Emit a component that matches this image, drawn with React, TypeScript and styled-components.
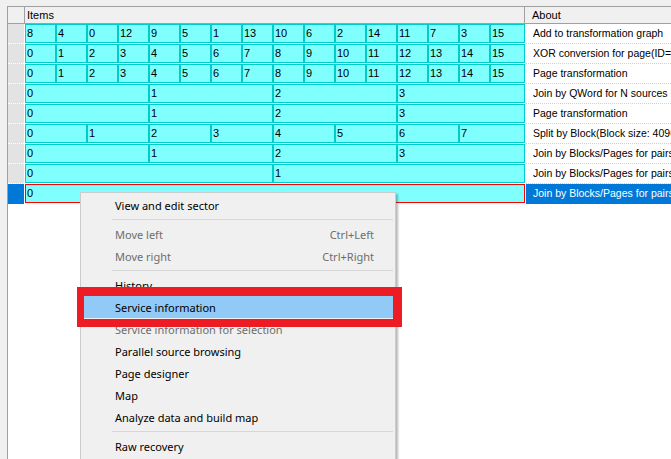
import React from "react";
import styled, { createGlobalStyle } from "styled-components";

const Global = createGlobalStyle`
  html, body { margin: 0; padding: 0; background: #f0f0f0; overflow: hidden; }
  body { width: 671px; height: 459px; }
  * { box-sizing: border-box; }
`;

const Frame = styled.div`
  position: relative;
  width: 671px;
  height: 459px;
  background: #f0f0f0;
  padding: 6px 0 0 7px;
  font-family: "Liberation Sans", Arial, sans-serif;
  font-size: 11px;
  color: #000;
  overflow: hidden;
`;

const Panel = styled.div`
  height: 100%;
  background: #fff;
  border-top: 1px solid #a0a0a0;
  border-left: 1px solid #a0a0a0;
  display: flex;
  flex-direction: column;
`;

const HeaderRow = styled.div`
  display: grid;
  grid-template-columns: 17px 500px 1fr;
  height: 17px;
  background: #f0f0f0;
  border-bottom: 1px solid #a0a0a0;
`;

const HeadCell = styled.div<{ $sep?: boolean; $pad?: number }>`
  display: flex;
  align-items: center;
  padding-left: ${(p) => p.$pad ?? 2}px;
  border-right: ${(p) => (p.$sep ? "1px solid #a0a0a0" : "none")};
  white-space: nowrap;
  overflow: hidden;
`;

const Row = styled.div`
  display: grid;
  grid-template-columns: 16px 1px 500px 1fr;
  height: 20px;
`;

const RowHead = styled.div<{ $sel?: boolean }>`
  background: ${(p) => (p.$sel ? "#0078d7" : "#e3e3e3")};
  border-bottom: 1px dotted ${(p) => (p.$sel ? "#0078d7" : "#ffffff")};
`;

const Gap = styled.div``;

const Cells = styled.div`
  display: grid;
  grid-template-columns: repeat(15, 31px) minmax(0, 1fr);
  height: 19px;
`;

const Cell = styled.div<{ $span: number; $red?: boolean }>`
  grid-column: span ${(p) => p.$span};
  background: #80ffff;
  border: 1px solid ${(p) => (p.$red ? "#ff0000" : "#00cccc")};
  padding-left: 1px;
  line-height: 17px;
  white-space: nowrap;
  overflow: hidden;
`;

const About = styled.div<{ $sel?: boolean }>`
  margin-left: 1px;
  padding-left: 7px;
  line-height: 19px;
  height: 20px;
  font-size: 10.5px;
  white-space: nowrap;
  overflow: hidden;
  background: ${(p) => (p.$sel ? "#0078d7" : "transparent")};
  color: ${(p) => (p.$sel ? "#fff" : "#000")};
  border-bottom: 1px dotted ${(p) => (p.$sel ? "#0078d7" : "#d0d0d0")};
`;

const Menu = styled.div`
  position: absolute;
  left: 80px;
  top: 192px;
  width: 316px;
  height: 290px;
  background: #f0f0f0;
  border: 1px solid #cccccc;
  box-shadow: 2px 2px 2px rgba(0, 0, 0, 0.28);
  padding: 1px 1px;
  font-family: "Noto Sans", "Open Sans", sans-serif;
  font-size: 11px;
`;

const Item = styled.div<{ $disabled?: boolean; $hot?: boolean }>`
  display: flex;
  justify-content: space-between;
  align-items: center;
  height: 22px;
  padding: 0 19px 0 32px;
  margin: 0 1px;
  color: ${(p) => (p.$disabled ? "#6d6d6d" : "#000")};
  background: ${(p) => (p.$hot ? "#91c9f7" : "transparent")};
  white-space: nowrap;
`;

const Shortcut = styled.span`
  color: #6d6d6d;
`;

const Sep = styled.div`
  height: 7px;
  display: flex;
  align-items: center;
  padding: 0 1px 0 30px;
  &::after {
    content: "";
    flex: 1;
    height: 1px;
    background: #d7d7d7;
  }
`;

const RedBox = styled.div`
  position: absolute;
  left: 77px;
  top: 287px;
  width: 325px;
  height: 40px;
  border-style: solid;
  border-color: #ed1c24;
  border-width: 9px 9px 8px 7px;
`;

type RowData = { cells: string[]; about: string; sel?: boolean };

const seq = (n: number) => Array.from({ length: n }, (_, i) => String(i));

const rows: RowData[] = [
  { cells: ["8", "4", "0", "12", "9", "5", "1", "13", "10", "6", "2", "14", "11", "7", "3", "15"], about: "Add to transformation graph" },
  { cells: seq(16), about: "XOR conversion for page(ID=0)" },
  { cells: seq(16), about: "Page transformation" },
  { cells: seq(4), about: "Join by QWord for N sources" },
  { cells: seq(4), about: "Page transformation" },
  { cells: seq(8), about: "Split by Block(Block size: 4096)" },
  { cells: seq(4), about: "Join by Blocks/Pages for pairs" },
  { cells: seq(2), about: "Join by Blocks/Pages for pairs" },
  { cells: seq(1), about: "Join by Blocks/Pages for pairs", sel: true },
];

type MenuEntry = { label?: string; shortcut?: string; disabled?: boolean; hot?: boolean; sep?: boolean };

const menu: MenuEntry[] = [
  { label: "View and edit sector" },
  { sep: true },
  { label: "Move left", shortcut: "Ctrl+Left", disabled: true },
  { label: "Move right", shortcut: "Ctrl+Right", disabled: true },
  { sep: true },
  { label: "History" },
  { label: "Service information", hot: true },
  { label: "Service information for selection", disabled: true },
  { label: "Parallel source browsing" },
  { label: "Page designer" },
  { label: "Map" },
  { label: "Analyze data and build map" },
  { sep: true },
  { label: "Raw recovery" },
];

export default function App() {
  return (
    <>
      <Global />
      <Frame>
        <Panel>
          <HeaderRow>
            <HeadCell $sep />
            <HeadCell $sep>Items</HeadCell>
            <HeadCell $pad={7}>About</HeadCell>
          </HeaderRow>
          {rows.map((r, i) => (
            <Row key={i}>
              <RowHead $sel={r.sel} />
              <Gap />
              <Cells>
                {r.cells.map((c, j) => (
                  <Cell key={j} $span={16 / r.cells.length} $red={r.sel}>
                    {c}
                  </Cell>
                ))}
              </Cells>
              <About $sel={r.sel}>{r.about}</About>
            </Row>
          ))}
        </Panel>
        <Menu>
          {menu.map((m, i) =>
            m.sep ? (
              <Sep key={i} />
            ) : (
              <Item key={i} $disabled={m.disabled} $hot={m.hot}>
                <span>{m.label}</span>
                {m.shortcut && <Shortcut>{m.shortcut}</Shortcut>}
              </Item>
            )
          )}
        </Menu>
        <RedBox />
      </Frame>
    </>
  );
}
